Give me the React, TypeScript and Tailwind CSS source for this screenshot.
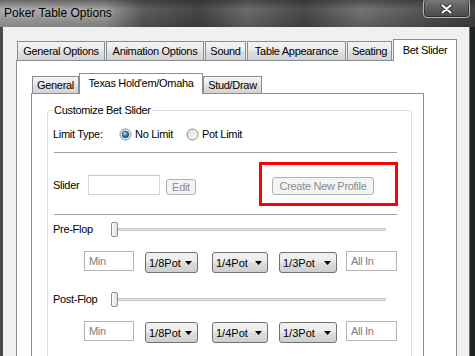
import React from 'react';

/* ─── shared styles ─────────────────────────────── */
const ui = "[font-family:'Liberation_Sans',Arial,sans-serif] text-[11px] leading-[14px] tracking-[-0.3px] text-black";
const tabBorder = 'border border-b-0 border-[#898c95]';
const tabIdle =
  'bg-[linear-gradient(180deg,#f3f3f3_0%,#ebebeb_45%,#dedede_55%,#d4d4d4_100%)]';

export default function App() {
  return (
    <div className="flex h-[356px] w-[475px] flex-col overflow-hidden bg-[#4d4d4d]">
      {/* ─── Title bar ─────────────────────────────── */}
      <div className="flex h-[27px] shrink-0 items-start justify-between bg-[linear-gradient(180deg,rgba(30,30,30,0.45)_0%,rgba(0,0,0,0)_35%,rgba(0,0,0,0.2)_100%),linear-gradient(90deg,#a8a8a8_0%,#9e9e9e_22%,#5e5e5e_30%,#464646_42%,#6c6c6c_52%,#4b4b4b_64%,#747474_76%,#585858_88%,#434343_100%)]">
        <span className="pl-[4px] pt-[6px] [font-family:'Liberation_Sans',Arial,sans-serif] text-[12px] leading-[15px] text-black [text-shadow:0_0_6px_rgba(255,255,255,0.6)]">
          Poker Table Options
        </span>
        <div className="mr-[5px] mt-[-2px] flex h-[20px] w-[47px] items-center justify-center rounded-[4px] border border-[#b4b4b4] bg-[linear-gradient(180deg,#7b7b7b_0%,#5e5e5e_55%,#4a4a4a_100%)] shadow-[inset_0_0_0_1px_rgba(0,0,0,0.35)]">
          <svg width="13" height="10" viewBox="0 0 13 10" className="mt-[2px]">
            <path d="M2.5 1.5 L10.5 8.5 M10.5 1.5 L2.5 8.5" stroke="#2a2a2a" strokeWidth="4" strokeLinecap="round" />
            <path d="M2.5 1.5 L10.5 8.5 M10.5 1.5 L2.5 8.5" stroke="#ffffff" strokeWidth="2.2" strokeLinecap="round" />
          </svg>
        </div>
      </div>

      {/* ─── Window body ───────────────────────────── */}
      <div className="flex flex-1">
        <div className="w-[3px] shrink-0 bg-[#4b4b4b]" />

        <div className={`w-[466px] shrink-0 bg-[#f0f0f0] pl-[13px] pt-[12px] ${ui}`}>
          {/* outer tabs */}
          <div className="flex h-[21px] items-end gap-[1px] pl-[1px]">
            <OuterTab w="w-[88px]">General Options</OuterTab>
            <OuterTab w="w-[98px]">Animation Options</OuterTab>
            <OuterTab w="w-[41px]">Sound</OuterTab>
            <OuterTab w="w-[99px]">Table Appearance</OuterTab>
            <OuterTab w="w-[45px]">Seating</OuterTab>
            <div className={`relative z-10 mb-[-1px] flex h-[22px] w-[64px] items-center justify-center bg-white pb-[2px] ${tabBorder}`}>
              Bet Slider
            </div>
          </div>

          {/* outer pane */}
          <div className="h-[320px] w-[441px] border border-[#898c95] bg-white pl-[14px] pt-[12px]">
            {/* inner tabs */}
            <div className="flex h-[20px] items-end pl-[1px]">
              <div className={`flex h-[17px] w-[47px] items-center justify-center ${tabBorder} ${tabIdle}`}>
                General
              </div>
              <div className={`relative z-10 mb-[-1px] flex h-[21px] w-[124px] items-center justify-center bg-white pb-[3px] ${tabBorder}`}>
                Texas Hold'em/Omaha
              </div>
              <div className={`flex h-[17px] w-[59px] items-center justify-center ${tabBorder} ${tabIdle}`}>
                Stud/Draw
              </div>
            </div>

            {/* inner pane */}
            <div className="h-[300px] w-[393px] border border-[#898c95] bg-white pl-[15px] pt-[9px]">
              <fieldset className="w-[365px] rounded-[3px] border border-[#d5dfe5] px-[5px] pb-[40px]">
                <legend className="px-[1px] leading-[14px]">Customize Bet Slider</legend>

                <div className="pt-[9px]">
                  {/* limit type */}
                  <div className="flex h-[16px] items-center">
                    <span className="w-[66px] shrink-0">Limit Type:</span>
                    <Radio checked />
                    <span className="ml-[3px]">No Limit</span>
                    <span className="ml-[13px] flex items-center">
                      <Radio />
                    </span>
                    <span className="ml-[3px]">Pot Limit</span>
                  </div>

                  <Rule className="mt-[10px]" />

                  {/* slider profile */}
                  <div className="mt-[9px] flex h-[44px] items-start">
                    <span className="mt-[16px] w-[35px] shrink-0">Slider</span>
                    <div className="mt-[13px] h-[20px] w-[72px] shrink-0 border border-[#d6d6d6] border-t-[#c8c8c8] bg-white" />
                    <DisabledButton className="ml-[6px] mt-[17px] h-[16px] w-[30px]">Edit</DisabledButton>
                    <div className="ml-[63px] h-[44px] w-[139px] shrink-0 border-[3px] border-[#ff0000] pl-[10px] pt-[12px]">
                      <DisabledButton className="h-[18px] w-[102px]">Create New Profile</DisabledButton>
                    </div>
                  </div>

                  <Rule className="mt-[8px]" />

                  <SliderRow className="mt-[6px]" label="Pre-Flop" />
                  <AmountRow className="mt-[14px]" />

                  <SliderRow className="mt-[18px]" label="Post-Flop" />
                  <AmountRow className="mt-[14px]" />
                </div>
              </fieldset>
            </div>
          </div>
        </div>

        <div className="w-[1px] shrink-0 bg-[#6b6b6b]" />
        <div className="w-[5px] shrink-0 bg-[#1d2426]" />
      </div>
    </div>
  );
}

/* —————————————————— helper components —————————————————— */
function OuterTab({ w, children }: { w: string; children: React.ReactNode }) {
  return (
    <div className={`flex h-[19px] shrink-0 items-center justify-center ${w} ${tabBorder} ${tabIdle}`}>
      {children}
    </div>
  );
}

function Rule({ className = '' }: { className?: string }) {
  return <div className={`ml-[1px] h-px w-[343px] bg-[#a0a0a0] ${className}`} />;
}

function DisabledButton({ className = '', children }: { className?: string; children: React.ReactNode }) {
  return (
    <div
      className={`flex shrink-0 items-center justify-center rounded-[3px] border border-[#adb2b5] bg-[#f4f4f4] text-[#8a8a8a] ${className}`}
    >
      {children}
    </div>
  );
}

function SliderRow({ label, className = '' }: { label: string; className?: string }) {
  return (
    <div className={`flex h-[16px] items-center ${className}`}>
      <span className="w-[58px] shrink-0">{label}</span>
      <div className="flex w-[275px] items-center">
        <div className="h-[15px] w-[7px] shrink-0 rounded-[2px] border border-[#8d8d8d] bg-[linear-gradient(90deg,#fafafa,#dedede)]" />
        <div className="h-[3px] flex-1 rounded-r-[1px] border border-[#c4c4c4] bg-[#e9e9e9]" />
      </div>
    </div>
  );
}

function AmountRow({ className = '' }: { className?: string }) {
  return (
    <div className={`flex h-[22px] items-start pl-[31px] ${className}`}>
      <TextBox w="w-[50px]">Min</TextBox>
      <Dropdown w="w-[53px]" className="ml-[11px]">1/8Pot</Dropdown>
      <Dropdown w="w-[56px]" className="ml-[14px]">1/4Pot</Dropdown>
      <Dropdown w="w-[58px]" className="ml-[11px]">1/3Pot</Dropdown>
      <TextBox w="w-[51px]" className="ml-[9px]">All In</TextBox>
    </div>
  );
}

function TextBox({ w, className = '', children }: { w: string; className?: string; children: React.ReactNode }) {
  return (
    <div className={`flex h-[20px] shrink-0 items-center border border-[#b4b4b4] bg-white pl-[4px] text-[#7d7d7d] ${w} ${className}`}>
      {children}
    </div>
  );
}

function Dropdown({ w, className = '', children }: { w: string; className?: string; children: React.ReactNode }) {
  return (
    <div
      className={`mt-[1px] flex h-[21px] shrink-0 items-center justify-between rounded-[3px] border border-[#707070] bg-[linear-gradient(180deg,#f2f2f2_0%,#ebebeb_48%,#dddddd_52%,#cfcfcf_100%)] pl-[3px] pr-[5px] tracking-normal ${w} ${className}`}
    >
      <span>{children}</span>
      <svg width="7" height="4" viewBox="0 0 7 4">
        <polygon points="0,0 7,0 3.5,4" fill="#000" />
      </svg>
    </div>
  );
}

function Radio({ checked = false }: { checked?: boolean }) {
  return (
    <svg width="13" height="13" viewBox="0 0 13 13" className="shrink-0">
      <defs>
        <linearGradient id="radioFace" x1="0" y1="0" x2="1" y2="1">
          <stop offset="0" stopColor="#dcdcdc" />
          <stop offset="1" stopColor="#fbfbfb" />
        </linearGradient>
        <radialGradient id="radioDot" cx="0.4" cy="0.35" r="0.7">
          <stop offset="0" stopColor="#b9e8ff" />
          <stop offset="0.45" stopColor="#3d8fd0" />
          <stop offset="1" stopColor="#0d3b66" />
        </radialGradient>
      </defs>
      <circle cx="6.5" cy="6.5" r="5.5" fill="url(#radioFace)" stroke="#8a8a8a" />
      {checked && <circle cx="6.5" cy="6.5" r="3.3" fill="url(#radioDot)" stroke="#1b4a78" strokeWidth="0.8" />}
    </svg>
  );
}
